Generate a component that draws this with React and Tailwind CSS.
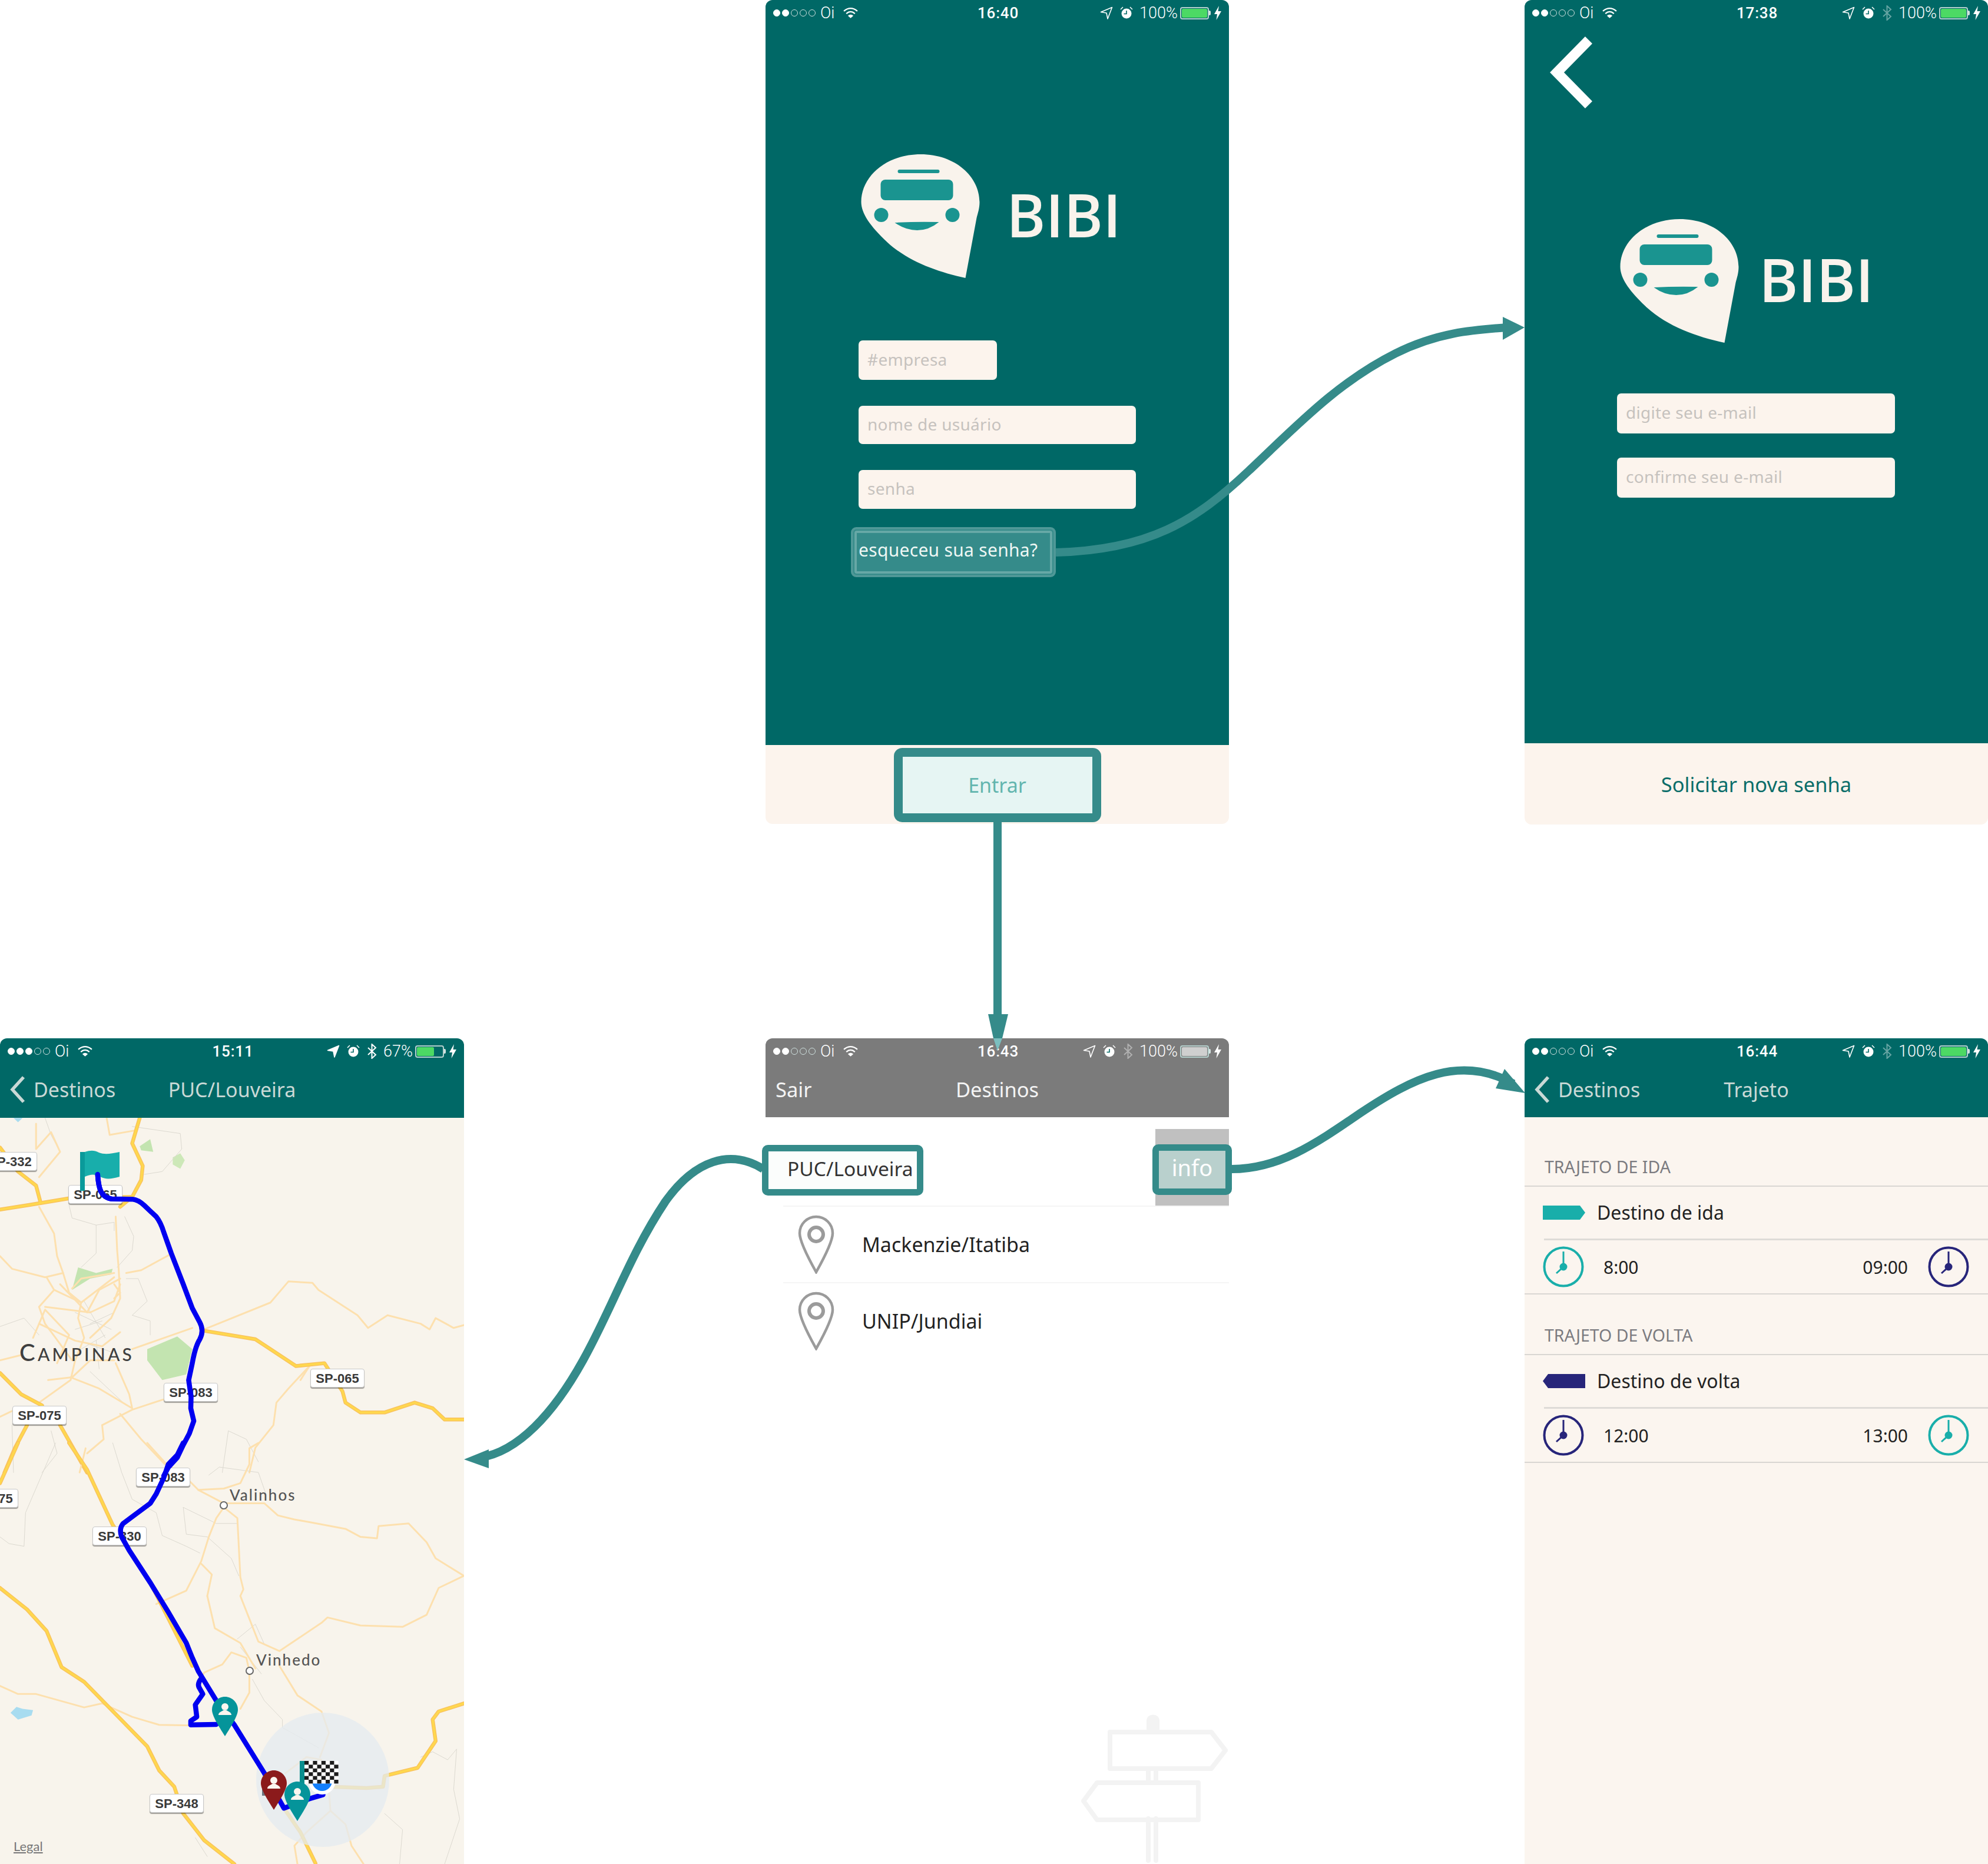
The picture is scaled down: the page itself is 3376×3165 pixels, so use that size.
const route6 = 'M325,510 C328,560 335,590 370,597 L440,598 Q460,600 480,620 L520,660 Q535,680 545,715 L570,790 L610,900 L640,985 L665,1035 Q680,1065 665,1095 Q650,1120 640,1180 L628,1240 L636,1300 L635,1340 L645,1385 L630,1430 L610,1470 L590,1515 L560,1550 L545,1580';
const route7 = 'M610,0 L590,45 L560,80 L545,130 L520,190 L500,225 L440,275 L410,300 Q395,320 405,350 L430,400 L500,520 L560,630 L620,745 L640,800 L660,850 L720,960 L780,1050 L880,1230 L945,1360 L1030,1325 L1075,1310';
const routeLoop = 'M668,880 Q655,900 665,915 L675,935 L650,975 L655,1020 L635,1035 L635,1050 L720,1048';

const major6 = [
  'M0,635 L100,618 L230,595 L440,590',
  'M465,310 L440,400 L475,480 L470,530 L440,590 L400,625',
  'M0,415 L60,500 L120,550 L135,610',
  'M680,1065 L850,1095 L985,1190 L1080,1180 L1140,1280 L1150,1320 L1200,1355 L1280,1355 L1380,1320 L1440,1340 L1480,1380 L1544,1380',
  'M0,1215 L70,1290 L140,1330',
  'M90,1400 L50,1480 L15,1568',
  'M200,1400 L290,1568',
];
const major7 = [
  'M60,0 L0,150',
  'M230,0 L290,100 L375,305 L500,520 L640,830',
  'M0,540 L90,620 L155,700 L205,835 L280,890 L350,970 L490,1130 L530,1220 L580,1280 L610,1380 L680,1480 L780,1568',
  'M945,1360 L1000,1450 L1050,1565',
  'M1100,1280 L1220,1285 L1275,1280 L1280,1240 L1390,1210 L1450,1110 L1440,1030 L1460,1000 L1544,970',
];
const minor6 = [
  'M0,800 L40,845 L150,875 L210,860 L230,930 L270,965 L380,875',
  'M380,860 L270,880 L240,915',
  'M420,860 L470,850 L530,815 L565,795',
  'M130,625 L180,720 L190,800 L210,860',
  'M385,660 L390,780 L395,845 L400,950 L370,1020 L300,1090',
  'M155,875 L180,920 L130,980 L150,1040 L185,1090 L240,1170',
  'M180,920 L270,965 L260,1020 L280,1090 L250,1170 L235,1240 L130,1320',
  'M440,1130 L520,1100 L640,1055',
  'M0,1170 L75,1150',
  'M235,1230 L330,1270 L440,1340 L430,1290 L385,1180',
  'M0,1370 L40,1350',
  'M340,1400 L440,1345 L540,1310 L640,1300',
  'M340,1400 L345,1450 L290,1500',
  'M400,1360 L470,1450 L550,1540',
  'M130,1040 L250,1100 L340,1120 L400,1070',
  'M150,980 L300,1000 L380,960 L400,900',
  'M160,1240 L240,1230 L300,1170 L380,1170',
  'M110,1090 L150,990 L230,1080 L190,1180',
  'M200,900 L290,1000 L330,920 L400,880',
  'M380,900 L400,930 L380,950',
  'M1030,1190 L1000,1240',
  'M680,1060 L900,965 L960,890 L1040,895 L1060,920 L1190,1010 L1225,1055 L1290,1010 L1400,1040 L1430,1060 L1450,1020 L1510,1055 L1544,1045',
  'M1030,1190 L960,1270 L920,1320 L910,1400 L850,1480 L830,1568',
  'M120,330 L120,420 L170,360 L200,430 L130,520',
  'M355,310 L365,370 L445,355',
];
const minor7 = [
  'M0,905 L60,935 L120,935 L280,985 L340,970 L440,1020 L530,1050 L640,1052',
  'M800,990 L830,930 L830,850 L820,800 L770,780 L740,825 L680,855 L660,890',
  'M690,570 L715,690 L800,745 L850,840',
  'M520,600 L620,550 L670,440 L695,350 L720,280 L745,240 L790,280 L800,500 L810,545 L800,570 L860,740 L930,775 L1070,670 L1090,650 L1200,680 L1340,685 L1420,640 L1460,540 L1544,495 L1450,430 L1420,370 L1360,300 L1260,310 L1255,355 L1200,350 L1150,320 L1030,295 L980,285 L925,270 L880,225 L745,225 L660,175 L620,130 L555,80 L490,0',
  'M690,570 L705,490 L670,450',
  'M860,0 L830,20 L830,80 L800,150 L745,170 L660,175',
  'M930,830 L990,940 L1070,1000 L1095,1080 L1065,1170',
  'M1095,1300 L1100,1370 L1150,1420 L1170,1500 L1210,1568',
  'M1100,1370 L1020,1450 L980,1500 L990,1568',
  'M950,1230 L1020,1170 L1070,1180',
  'M285,20 L265,110',
];
const thin6 = [
  'M150,310 L170,370 L200,430',
  'M440,340 L600,365 L605,420 L540,500 L480,510',
  'M230,620 L240,665 L320,690 L320,790 L270,840',
  'M320,690 L380,680 L380,710',
  'M415,660 L445,730 L440,780 L390,840',
  'M420,880 L460,880 L490,960 L440,1010 L500,1030 L500,1080',
  'M250,1000 L370,1060',
  'M280,960 L350,1090',
  'M300,1040 L380,1000',
  'M260,1100 L370,1140',
  'M300,1210 L420,1330',
  'M0,1050 L80,1020 L130,1080',
  'M320,1100 L330,1200',
  'M250,1060 L340,1030',
  'M270,1130 L350,1080',
  'M40,1400 L45,1568',
  'M170,1420 L190,1500 L140,1568',
  'M740,1568 L760,1420 L820,1450 L860,1530',
];
const thin7 = [
  'M185,0 L85,260 L80,385 L30,375 L0,350',
  'M375,0 L405,110 L440,210 L520,260 L540,345 L620,385 L665,410',
  'M610,240 L620,340 L690,350 L770,430 L795,495',
  'M610,240 L720,300 L790,300',
  'M695,120 L730,90 L860,110 L885,190',
  'M790,730 L850,675 L880,750 L920,770',
  'M800,760 L870,860',
  'M840,880 L880,960 L940,1030 L940,1060 L1060,1135',
  'M1280,1380 L1340,1440 L1330,1568',
  'M1400,1170 L1440,1150 L1490,1180 L1520,1140 L1510,1290 L1530,1400 L1480,1568',
  'M650,1470 L690,1540',
];

function Lines({ items, color, width }) {
  return items.map((d, i) => (
    <path key={i} d={d} fill="none" stroke={color} strokeWidth={width} strokeLinejoin="round" strokeLinecap="round" vectorEffect="non-scaling-stroke" />
  ));
}

function Pin({ x, y, color }) {
  return (
    <g transform={`translate(${x} ${y})`}>
      <path d="M22 0C34 0 44 10 44 22C44 32 34 48 22 67C10 48 0 32 0 22C0 10 10 0 22 0Z" fill={color} />
      <circle cx="22" cy="17" r="6" fill="#fbf5ef" />
      <path d="M11 31C11 26 17 25 19 23H25C27 25 33 26 33 31Z" fill="#fbf5ef" />
    </g>
  );
}

function MapBase() {
  return (
    <svg className="absolute inset-0 w-full h-full" viewBox="0 0 788 1267">
      <g transform="matrix(.5102 0 0 .4785 0 -148)">
        <path d="M490,1130 L590,1085 L640,1130 L620,1220 L540,1240 L490,1170Z" fill="#c3e4b0" />
        <path d="M240,920 L260,840 L320,860 L375,845 L370,865 L300,880Z" fill="#c3e4b0" />
        <path d="M575,450 L600,435 L615,460 L600,490 L575,475Z" fill="#cde8b8" />
        <path d="M465,410 L500,385 L510,430 L470,425Z" fill="#c3e4b0" />
        <path d="M45,310 L60,325 L75,310Z" fill="#a8dcf0" />
        <Lines items={thin6} color="#dcd9d0" width={1} />
        <Lines items={minor6} color="#fde0ae" width={3} />
        <Lines items={major6} color="#f9c35e" width={6.5} />
        <Lines items={major6} color="#ffd84d" width={3.5} />
      </g>
      <g transform="matrix(.5102 0 0 .456 0 552)">
        <path d="M35,1005 L55,983 L75,990 L110,995 L105,1015 L60,1030Z" fill="#a8dcf0" />
        <Lines items={thin7} color="#dcd9d0" width={1} />
        <Lines items={minor7} color="#fde0ae" width={3} />
        <Lines items={major7} color="#f9c35e" width={6.5} />
        <Lines items={major7} color="#ffd84d" width={3.5} />
      </g>
      <ellipse cx="548" cy="1124" rx="113" ry="114" fill="#e4ebf0" fillOpacity=".75" />
      <circle cx="380" cy="658" r="6" fill="#fff" stroke="#666" strokeWidth="2" />
      <circle cx="424" cy="939" r="6" fill="#fff" stroke="#666" strokeWidth="2" />
    </svg>
  );
}

function MapOverlay() {
  const checks = [];
  for (let r = 0; r < 6; r++) {
    for (let c = 0; c < 8; c++) {
      if ((r + c) % 2 === 0) checks.push(<rect key={`${r}-${c}`} x={517 + c * 7.2} y={1092 + r * 6.4} width="7.2" height="6.4" fill="#1c1c1c" />);
    }
  }
  return (
    <svg className="absolute inset-0 w-full h-full" viewBox="0 0 788 1267">
      <g transform="matrix(.5102 0 0 .4785 0 -148)">
        <Lines items={[route6]} color="#0000f0" width={8.5} />
      </g>
      <g transform="matrix(.5102 0 0 .456 0 552)">
        <Lines items={[route7, routeLoop]} color="#0000f0" width={8.5} />
      </g>
      <rect x="445" y="1135" width="14" height="16" fill="#6d7680" />
      <circle cx="547" cy="1126" r="23" fill="#fff" />
      <circle cx="547" cy="1126" r="17" fill="#127ffc" />
      <rect x="517" y="1092" width="57.6" height="38.4" fill="#fff" />
      {checks}
      <rect x="509" y="1092" width="8" height="44" fill="#0a8e8e" />
      <Pin x={360} y={983} color="#05949a" />
      <Pin x={443} y={1108} color="#8b1a1b" />
      <Pin x={483} y={1127} color="#05949a" />
      <g transform="translate(136 58)">
        <path d="M8 0C18 -3 24 -3 32 1C42 5 52 3 67 0V42C52 46 44 47 34 42C24 37 18 38 8 42Z" fill="#18aeab" />
      </g>
      <rect x="136" y="58" width="8" height="66" fill="#0a9a9a" />
      <g transform="matrix(.5102 0 0 .4785 0 -148)">
        <Lines items={['M325,510 C328,560 335,590 370,597']} color="#0000f0" width={8.5} />
      </g>
    </svg>
  );
}

function RoadSign({ className, children }) {
  return (
    <div className={`absolute h-[32px] w-[92px] rounded-[4px] bg-white border border-[#c8c8c8] shadow-[0_2px_1px_rgba(0,0,0,0.35)] flex items-center justify-center text-[22px] font-bold text-[#3a3a3a] font-['Liberation_Sans',sans-serif] ${className}`}>
      {children}
    </div>
  );
}

function Wifi() {
  return (
    <svg width="25" height="20" viewBox="0 0 24 19" fill="none" stroke="currentColor" strokeWidth="2.2">
      <path d="M1 6.5Q12 -2.5 23 6.5" />
      <path d="M5 10.5Q12 4.5 19 10.5" />
      <path d="M12 18L7.5 14Q12 10.5 16.5 14Z" fill="currentColor" stroke="none" />
    </svg>
  );
}

function Status({ time, signal = 2, bt, percent = '100%', level = 'w-full', battery = 'bg-[#4cd964]', arrowSolid }) {
  const dots = [0, 1, 2, 3, 4];
  return (
    <div className="h-[42px] grid grid-cols-[1fr_auto_1fr] items-center px-[13px] pt-[2px] text-white font-['Roboto',sans-serif] text-[27px] leading-none">
      <div className="flex items-center">
        <div className="flex gap-[3px] w-[80px]">
          {dots.map((d) => (
            <span key={d} className={d < signal ? 'w-[12px] h-[12px] rounded-full bg-white border border-white' : 'w-[12px] h-[12px] rounded-full border border-[#cfe0de]'} />
          ))}
        </div>
        <span className="font-light w-[39px]">Oi</span>
        <Wifi />
      </div>
      <span className="font-medium text-center text-[26px] tracking-[0.8px] pl-[3px]">{time}</span>
      <div className="flex items-center justify-end">
        <svg width="22" height="22" viewBox="0 0 22 22" fill={arrowSolid ? 'currentColor' : 'none'} stroke="currentColor" strokeWidth="1.6">
          <path d="M20.5 1.5L1.5 9.5L11 11L13 21Z" strokeLinejoin="round" />
        </svg>
        <svg className="ml-[12px]" width="22" height="22" viewBox="0 0 22 22" fill="currentColor">
          <path d="M1 5L5 1M21 5L17 1" stroke="currentColor" strokeWidth="1.5" fill="none" />
          <circle cx="11" cy="12" r="8.5" />
          <path d="M11 7V12.5H6.5" stroke="#006866" strokeWidth="1.6" fill="none" />
        </svg>
        {bt && (
          <svg className={bt === 'dim' ? 'ml-[12px] opacity-40' : 'ml-[12px]'} width="17" height="26" viewBox="0 0 17 26" fill="none" stroke="currentColor" strokeWidth="2">
            <path d="M2 7L15 19L8.5 25V1L15 7L2 19" />
          </svg>
        )}
        <span className="ml-[11px] font-light">{percent}</span>
        <div className="ml-[4px] w-[49px] h-[21px] rounded-[4px] border-2 border-[#b4cfcc] p-[1px]">
          <div className={`h-full rounded-[2px] ${level} ${battery}`} />
        </div>
        <div className="w-[3px] h-[8px] bg-[#d5e4e2] rounded-r-[2px] mr-[6px]" />
        <svg width="12" height="24" viewBox="0 0 12 24" fill="currentColor">
          <path d="M8 0L0 14H5L3.5 24L12 9H6.5Z" />
        </svg>
      </div>
    </div>
  );
}

function Logo() {
  return (
    <svg width="202" height="210" viewBox="0 0 201 210" className="shrink-0">
      <path d="M101 0C160 0 201 38 201 81C201 92 198 100 196 108L177 210C130 200 80 182 45 150C15 122 0 100 0 81C0 38 42 0 101 0Z" fill="#f9f3ec" />
      <rect x="62" y="26" width="71" height="6" rx="3" fill="#1a9490" />
      <rect x="33" y="43" width="123" height="35" rx="8" fill="#1a9490" />
      <ellipse cx="34" cy="103" rx="12" ry="12" fill="#1a9490" />
      <ellipse cx="155" cy="103" rx="12" ry="12" fill="#1a9490" />
      <path d="M57 116Q95 114 132 115Q115 129 95 129Q75 129 57 116Z" fill="#1a9490" />
    </svg>
  );
}

function Bibi() {
  return <span className="font-['Open_Sans',sans-serif] text-[101px] leading-none font-semibold text-[#f9f3ec] pb-[5px]">BIBI</span>;
}

function Field({ className, children }) {
  return (
    <div className={`flex items-center rounded-[7px] bg-[#fcf4ed] pl-[15px] pb-[4px] text-[28px] tracking-[0.3px] text-[#c6c2be] ${className}`}>{children}</div>
  );
}

function Chevron({ className }) {
  return (
    <svg className={className} width="26" height="46" viewBox="0 0 26 46" fill="none" stroke="currentColor" strokeWidth="5.5">
      <path d="M23 2L4 23L23 44" />
    </svg>
  );
}

function NavBack({ title }) {
  return (
    <div className="h-[92px] relative flex items-center text-[#c9d9d6] text-[34px] pb-[2px]">
      <Chevron className="ml-[17px] mr-[14px]" />
      <span>Destinos</span>
      <span className="absolute inset-x-0 text-center">{title}</span>
    </div>
  );
}

function LoginPhone() {
  return (
    <div className="w-[787px] h-[1399px] flex flex-col rounded-[12px] bg-[#fcf4ed]">
      <div className="flex-1 bg-[#006866] rounded-t-[12px] flex flex-col">
        <Status time="16:40" />
        <div className="flex flex-col pl-[158px] pt-[220px]">
          <div className="flex items-center gap-[45px] pl-[4px]">
            <Logo />
            <Bibi />
          </div>
          <Field className="mt-[106px] w-[235px] h-[67px]">#empresa</Field>
          <Field className="mt-[44px] w-[471px] h-[65px]">nome de usuário</Field>
          <Field className="mt-[44px] w-[471px] h-[66px]">senha</Field>
          <div className="mt-[31px] -ml-[13px] w-[348px] h-[85px] rounded-[9px] border-[4px] border-[#4f9897] bg-[#358b8a] p-[2px]">
            <div className="h-full rounded-[4px] border-[4px] border-[#66a8a6] flex items-center pb-[9px] pl-[3px] text-[30px] tracking-[0.3px] text-[#eef7f4] whitespace-nowrap">
              esqueceu sua senha?
            </div>
          </div>
        </div>
      </div>
      <div className="h-[134px] flex justify-center pt-[5px]">
        <div className="w-[352px] h-[126px] rounded-[14px] border-[15px] border-[#358b8a] bg-[#e6f5f3] flex items-center justify-center text-[34px] text-[#62b5ae]">
          Entrar
        </div>
      </div>
    </div>
  );
}

function ResetPhone() {
  return (
    <div className="w-[787px] h-[1400px] flex flex-col rounded-[12px] bg-[#fcf4ed]">
      <div className="flex-1 bg-[#006866] rounded-t-[12px] flex flex-col">
        <Status time="17:38" bt="dim" />
        <svg className="ml-[43px] mt-[20px] text-white" width="72" height="122" viewBox="0 0 72 122" fill="none" stroke="currentColor" strokeWidth="17">
          <path d="M66 6L12 61L66 116" />
        </svg>
        <div className="flex flex-col pl-[157px] pt-[188px]">
          <div className="flex items-center gap-[34px] pl-[5px]">
            <Logo />
            <Bibi />
          </div>
          <Field className="mt-[86px] w-[472px] h-[68px]">digite seu e-mail</Field>
          <Field className="mt-[41px] w-[472px] h-[68px]">confirme seu e-mail</Field>
        </div>
      </div>
      <div className="h-[138px] flex items-center justify-center pt-[2px] text-[34.5px] text-[#0a6d69]">Solicitar nova senha</div>
    </div>
  );
}

function MapPhone() {
  return (
    <div className="w-[788px] h-[1402px] flex flex-col rounded-t-[12px] bg-[#f8f4ec]">
      <div className="h-[135px] bg-[#006866] rounded-t-[12px]">
        <Status time="15:11" signal={3} bt="on" percent="67%" level="w-[67%]" arrowSolid />
        <NavBack title="PUC/Louveira" />
      </div>
      <div className="relative flex-1 overflow-hidden">
        <MapBase />
        <RoadSign className="-left-[29px] top-[58px]">SP-332</RoadSign>
        <RoadSign className="left-[116px] top-[114px]">SP-065</RoadSign>
        <RoadSign className="left-[527px] top-[426px]">SP-065</RoadSign>
        <RoadSign className="left-[278px] top-[450px]">SP-083</RoadSign>
        <RoadSign className="left-[21px] top-[489px]">SP-075</RoadSign>
        <RoadSign className="left-[231px] top-[594px]">SP-083</RoadSign>
        <RoadSign className="-left-[61px] top-[630px]">SP-075</RoadSign>
        <RoadSign className="left-[157px] top-[694px]">SP-330</RoadSign>
        <RoadSign className="left-[254px] top-[1148px]">SP-348</RoadSign>
        <span className="absolute left-[33px] top-[378px] text-[#3f3f3f] text-[30px] font-medium tracking-[4.2px] font-['Lato',sans-serif] leading-[40px]">
          <span className="text-[40px]">C</span>AMPINAS
        </span>
        <span className="absolute left-[390px] top-[624px] text-[#555] text-[26px] font-medium tracking-[2px] font-['Lato',sans-serif] leading-[32px]">Valinhos</span>
        <span className="absolute left-[435px] top-[904px] text-[#555] text-[26px] font-medium tracking-[2px] font-['Lato',sans-serif] leading-[32px]">Vinhedo</span>
        <span className="absolute left-[23px] top-[1225px] text-[#777] text-[22px] underline font-['Lato',sans-serif] leading-[24px]">Legal</span>
        <MapOverlay />
      </div>
    </div>
  );
}

function GrayPin() {
  return (
    <svg width="62" height="100" viewBox="0 0 62 100" fill="none" stroke="#9b9b9b" strokeWidth="4.5" className="shrink-0">
      <path d="M31 3C46 3 59 15 59 31C59 45 45 72 31 97C17 72 3 45 3 31C3 15 16 3 31 3Z" />
      <circle cx="31" cy="33" r="12" strokeWidth="6" />
    </svg>
  );
}

function SignPost() {
  return (
    <svg className="absolute left-[534px] bottom-0" width="252" height="255" viewBox="0 0 252 255" fill="none" stroke="#f3f3f3" strokeWidth="8" strokeLinejoin="round" strokeLinecap="round">
      <path d="M113 28V12C113 -2 135 -2 135 12V28Z" fill="#f3f3f3" stroke="none" />
      <path d="M51 31H223L247 62L223 93H51Z" />
      <path d="M201 117H29L6 148L29 180H201Z" />
      <path d="M116 95V115M129 95V115M116 178V249M129 178V249" />
    </svg>
  );
}

function ListPhone() {
  return (
    <div className="relative w-[787px] h-[1402px] flex flex-col rounded-t-[12px] bg-white">
      <div className="h-[134px] bg-[#7b7b7b] rounded-t-[12px]">
        <Status time="16:43" bt="dim" battery="bg-[#cfcfcf]" />
        <div className="relative h-[92px] flex items-center pl-[17px] text-[34.5px] text-[#f4f4f4] pb-[2px]">
          <span>Sair</span>
          <span className="absolute inset-x-0 text-center">Destinos</span>
        </div>
      </div>
      <div className="h-[150px] flex justify-between pt-[20px]">
        <div className="-ml-[6px] mt-[27px] w-[274px] h-[86px] rounded-[10px] border-[11px] border-[#358b8a] bg-[#fbfdfc] flex items-center pl-[32px] pb-[6px] text-[33.5px] text-[#333] whitespace-nowrap">
          PUC/Louveira
        </div>
        <div className="relative w-[125px] h-[130px] bg-[#c0c0c0]">
          <div className="absolute -left-[5px] -right-[5px] top-[26px] h-[86px] rounded-[10px] border-[11px] border-[#358b8a] bg-[#b9d0cd] flex items-center justify-center pb-[8px] text-[38px] text-white">
            info
          </div>
        </div>
      </div>
      <div className="ml-[30px] h-[130px] flex items-center gap-[47px] pl-[25px] border-t-2 border-[#f5f5f5] text-[34px] text-[#222]">
        <GrayPin />
        <span>Mackenzie/Itatiba</span>
      </div>
      <div className="ml-[30px] h-[130px] flex items-center gap-[47px] pl-[25px] border-t-2 border-[#f5f5f5] text-[34px] text-[#222]">
        <GrayPin />
        <span>UNIP/Jundiai</span>
      </div>
      <SignPost />
    </div>
  );
}

function Clock({ color }) {
  return (
    <svg width="70" height="70" viewBox="0 0 70 70" fill="none" stroke={color} className="shrink-0">
      <circle cx="35" cy="35" r="32.5" strokeWidth="4" />
      <path d="M35 9V35L23 46" strokeWidth="3" />
      <circle cx="35" cy="35" r="6.5" fill={color} stroke="none" />
    </svg>
  );
}

function Tag({ color, reverse }) {
  return (
    <svg width="72" height="24" viewBox="0 0 72 24" className="shrink-0">
      <path d={reverse ? 'M72 0H9L0 12L9 24H72Z' : 'M0 0H63L72 12L63 24H0Z'} fill={color} />
    </svg>
  );
}

const teal = '#19aeaa';
const navy = '#27257a';

function TripBlock({ heading, height, label, left, right, leftColor, rightColor, reverse }) {
  return (
    <>
      <div className={`${height} border-b-2 border-[#d9d6d2] flex items-end pb-[10px] pl-[34px] text-[28.5px] text-[#7b7b80]`}>{heading}</div>
      <div className="h-[88px] flex items-center gap-[20px] pl-[31px] text-[32px] text-[#222]">
        <Tag color={leftColor} reverse={reverse} />
        <span>{label}</span>
      </div>
      <div className="ml-[33px] h-[3px] bg-[#dedbd7]" />
      <div className="h-[92px] border-b-2 border-[#d9d6d2] flex items-center pl-[31px] pr-[32px] text-[30px] text-[#222]">
        <Clock color={leftColor} />
        <span className="ml-[33px] flex-1">{left}</span>
        <span className="mr-[34px]">{right}</span>
        <Clock color={rightColor} />
      </div>
    </>
  );
}

function TripPhone() {
  return (
    <div className="w-[787px] h-[1402px] flex flex-col rounded-t-[12px] bg-[#fbf5ef]">
      <div className="h-[134px] bg-[#006866] rounded-t-[12px]">
        <Status time="16:44" bt="dim" />
        <NavBack title="Trajeto" />
      </div>
      <TripBlock heading="TRAJETO DE IDA" height="h-[118px]" label="Destino de ida" left="8:00" right="09:00" leftColor={teal} rightColor={navy} />
      <TripBlock heading="TRAJETO DE VOLTA" height="h-[103px]" label="Destino de volta" left="12:00" right="13:00" leftColor={navy} rightColor={teal} reverse />
    </div>
  );
}

function Connectors() {
  return (
    <svg className="absolute inset-0 pointer-events-none" width="3376" height="3165" viewBox="0 0 3376 3165" fill="none" stroke="#358b8a" strokeWidth="14">
      <path d="M1793 938C1950 934 2030 885 2120 800C2200 725 2270 650 2370 600C2440 565 2500 560 2560 556" />
      <path d="M2552 538L2589 556L2552 577Z" fill="#358b8a" stroke="none" />
      <path d="M1694 1396V1730" />
      <path d="M1678 1722H1712L1702 1763H1687Z" fill="#358b8a" stroke="none" />
      <path d="M1687 1763H1702L1694 1784Z" fill="#7bbfbf" stroke="none" />
      <path d="M1296 1985C1240 1950 1180 1970 1130 2040C1070 2130 1040 2220 990 2310C940 2400 880 2465 815 2475" />
      <path d="M830 2461L788 2478L830 2493Z" fill="#358b8a" stroke="none" />
      <path d="M2092 1985C2170 1985 2230 1945 2310 1890C2400 1830 2480 1790 2570 1840" />
      <path d="M2555 1815L2590 1856L2540 1848Z" fill="#358b8a" stroke="none" />
    </svg>
  );
}

export default function App() {
  return (
    <div className="relative w-[3376px] h-[3165px] bg-white font-['Noto_Sans',sans-serif] grid grid-cols-[1300px_1289px_787px] grid-rows-[1400px_1402px] gap-y-[363px]">
      <div />
      <LoginPhone />
      <ResetPhone />
      <MapPhone />
      <ListPhone />
      <TripPhone />
      <Connectors />
    </div>
  );
}
